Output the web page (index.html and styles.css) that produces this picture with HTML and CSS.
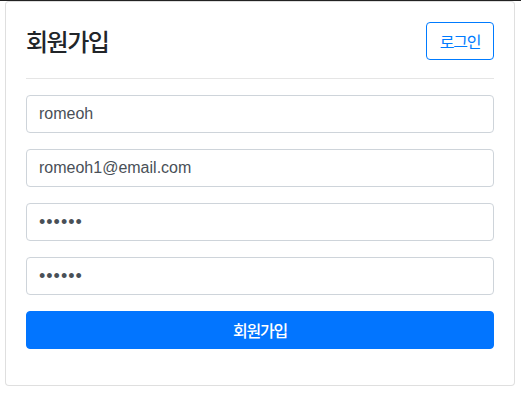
FILE: index.html
```html
<!DOCTYPE html>
<html lang="ko">
<head>
    <meta charset="UTF-8">
    <meta name="viewport" content="width=device-width, initial-scale=1.0">
    <title>회원가입</title>
    <link rel="stylesheet" href="styles.css">
</head>
<body>
    <div class="topline"></div>
    <div class="card">
        <div class="card-head">
            <h4 class="title">회원가입</h4>
            <a href="#" class="btn btn-outline">로그인</a>
        </div>
        <hr>
        <form class="join-form">
            <input class="form-control" type="text" value="romeoh">
            <input class="form-control" type="email" value="romeoh1@email.com">
            <input class="form-control pw" type="password" value="123456">
            <input class="form-control pw" type="password" value="123456">
            <button type="button" class="btn btn-primary">회원가입</button>
        </form>
    </div>
</body>
</html>
```

FILE: styles.css
```css
* {
    margin: 0;
    padding: 0;
    box-sizing: border-box;
}
body {
    font-family: "Liberation Sans", "Noto Sans CJK KR", sans-serif;
    color: #212529;
    background-color: white;
}
a {
    text-decoration: none;
}
.topline {
    height: 1px;
    background-color: #222;
}
.card {
    margin: 0 6px 0 5px;
    border: 1px solid rgba(0, 0, 0, 0.125);
    border-top-color: #ddd;
    border-radius: 4px;
    padding: 20px;
}
.card-head {
    display: flex;
    justify-content: space-between;
    align-items: center;
    height: 38px;
}
.title {
    font-family: "Noto Sans CJK KR", sans-serif;
    font-size: 24px;
    font-weight: 500;
    letter-spacing: -1.5px;
    line-height: 38px;
}
.btn {
    font-family: "Noto Sans CJK KR", sans-serif;
    font-size: 16px;
    letter-spacing: -1.2px;
    height: 38px;
    display: flex;
    align-items: center;
    justify-content: center;
    border-radius: 4px;
    border: 1px solid #007bff;
    cursor: pointer;
}
.btn-outline {
    width: 68px;
    color: #007bff;
    background-color: white;
}
.btn-primary {
    width: 100%;
    color: white;
    font-weight: 500;
    background-color: #0275ff;
    border-color: #0275ff;
}
hr {
    border: 0;
    border-top: 1px solid rgba(0, 0, 0, 0.1);
    margin: 18px 0 16px;
}
.join-form {
    display: flex;
    flex-direction: column;
    gap: 16px;
    margin-bottom: 16px;
}
.form-control {
    height: 38px;
    width: 100%;
    padding: 6px 12px;
    font-family: "Liberation Sans", sans-serif;
    font-size: 16px;
    color: #495057;
    border: 1px solid #ced4da;
    border-radius: 4px;
    outline: none;
}
.pw {
    font-size: 18px;
    letter-spacing: 1px;
}
```
